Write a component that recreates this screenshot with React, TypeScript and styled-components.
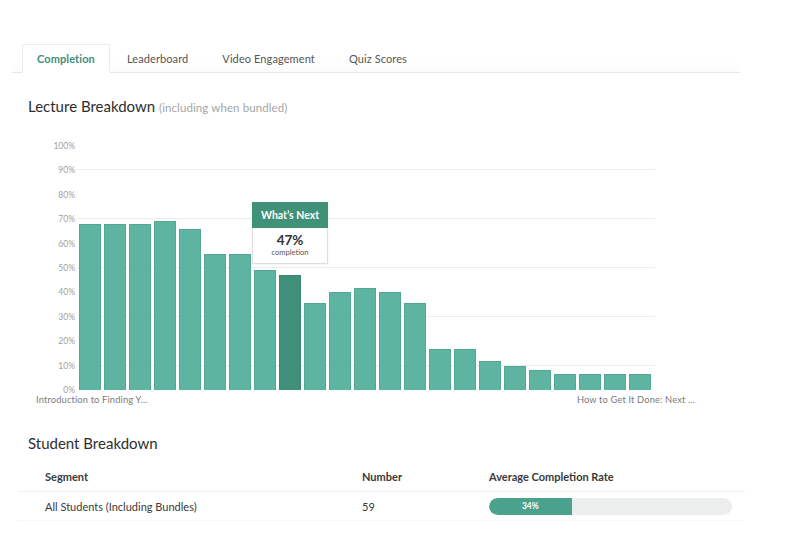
import React from "react";
import styled, { createGlobalStyle } from "styled-components";

const Global = createGlobalStyle`
  html, body { margin: 0; padding: 0; background: #fff; }
  body { font-family: Lato, "Open Sans", "Liberation Sans", sans-serif; color: #333; }
  * { box-sizing: border-box; }
`;

const Page = styled.div`
  width: 810px;
  height: 559px;
  padding-top: 44px;
  overflow: hidden;
`;

const TabBar = styled.div`
  margin-left: 12px;
  width: 728px;
  height: 29px;
  display: flex;
  align-items: stretch;
  padding-left: 10px;
  border-bottom: 1px solid #e6e6e6;
  background: linear-gradient(to bottom, #fff 60%, #fbfbfb 100%);
`;

const Tab = styled.div<{ $active?: boolean }>`
  display: flex;
  align-items: center;
  justify-content: center;
  padding: 0 ${(p) => (p.$active ? "14px" : "16px")};
  margin-bottom: -1px;
  font-size: 11px;
  font-weight: ${(p) => (p.$active ? 700 : 400)};
  color: ${(p) => (p.$active ? "#3f8f78" : "#555")};
  background: ${(p) => (p.$active ? "#fff" : "transparent")};
  border: 1px solid ${(p) => (p.$active ? "#ececec" : "transparent")};
  border-bottom: 1px solid ${(p) => (p.$active ? "#fff" : "transparent")};
  letter-spacing: 0.1px;
`;

const Section = styled.div`
  padding-left: 28px;
`;

const Title = styled.h2`
  margin: 24px 0 0 0;
  font-size: 15px;
  line-height: 18px;
  font-weight: 400;
  color: #2e2e2e;
`;

const Sub = styled.span`
  font-size: 11.5px;
  color: #a5a5a5;
  letter-spacing: 0.1px;
`;

const ChartWrap = styled.div`
  margin-top: 29px;
  display: flex;
  flex-direction: column;
`;

const ChartRow = styled.div`
  display: flex;
  align-items: flex-start;
`;

const YAxis = styled.div`
  width: 48px;
  height: 244px;
  display: flex;
  flex-direction: column;
  justify-content: space-between;
  align-items: flex-end;
  padding-right: 1px;
`;

const YLabel = styled.div`
  height: 0;
  display: flex;
  align-items: center;
  font-size: 8.5px;
  color: #a0a0a0;
`;

const Plot = styled.div`
  position: relative;
  width: 577px;
  height: 244px;
  margin-left: 2px;
  display: flex;
  align-items: flex-end;
  gap: 3px;
  padding-left: 1px;
`;

const GridLine = styled.div`
  position: absolute;
  left: 0;
  right: 0;
  height: 1px;
  background: #ececec;
`;

const Bar = styled.div<{ $dark?: boolean }>`
  position: relative;
  width: 22px;
  flex: none;
  background: ${(p) => (p.$dark ? "#3f8f79" : "#5db4a1")};
  border: 1px solid ${(p) => (p.$dark ? "#3a8571" : "#53a894")};
  border-bottom: none;
`;

const Tooltip = styled.div`
  position: absolute;
  bottom: calc(100% + 12px);
  left: 50%;
  transform: translateX(-50%);
  width: 76px;
  background: #fff;
  border: 1px solid #dedede;
  box-shadow: 0 1px 2px rgba(0, 0, 0, 0.06);
  z-index: 2;
`;

const TipHead = styled.div`
  background: #3f9178;
  color: #fff;
  font-size: 10.5px;
  font-weight: 700;
  height: 26px;
  display: flex;
  align-items: center;
  justify-content: center;
  margin: -1px -1px 0 -1px;
`;

const TipBody = styled.div`
  display: flex;
  flex-direction: column;
  align-items: center;
  padding: 4px 0 5px;
`;

const TipValue = styled.div`
  font-size: 13.5px;
  font-weight: 700;
  color: #333;
  line-height: 16px;
`;

const TipLabel = styled.div`
  font-size: 7.5px;
  color: #555;
  line-height: 10px;
`;

const XLabels = styled.div`
  display: flex;
  justify-content: space-between;
  width: 659px;
  margin-left: 8px;
  margin-top: 4px;
  font-size: 9.3px;
  color: #7a7a7a;
  letter-spacing: 0.15px;
`;

const SectionTitle = styled.h2`
  margin: 29px 0 0 0;
  font-size: 15px;
  line-height: 18px;
  font-weight: 400;
  color: #2e2e2e;
`;

const Table = styled.div`
  margin-top: 10px;
  margin-left: -10px;
  width: 727px;
  display: flex;
  flex-direction: column;
`;

const Row = styled.div<{ $head?: boolean }>`
  display: grid;
  grid-template-columns: 317px 127px 1fr;
  align-items: center;
  height: ${(p) => (p.$head ? "30px" : "29px")};
  padding-left: 27px;
  font-size: 11px;
  font-weight: ${(p) => (p.$head ? 700 : 400)};
  color: #3a3a3a;
  border-bottom: 1px solid ${(p) => (p.$head ? "#f0f0f0" : "#f7f7f7")};
`;

const Progress = styled.div`
  width: 243px;
  height: 17px;
  border-radius: 9px;
  background: #eceeee;
  overflow: hidden;
  display: flex;
`;

const Fill = styled.div`
  height: 100%;
  background: #4aa28c;
  border-radius: 9px 0 0 9px;
  display: flex;
  align-items: center;
  justify-content: center;
  color: #fff;
  font-size: 8.5px;
  font-weight: 700;
`;

const values = [68, 68, 68, 69.2, 66, 55.7, 55.7, 49, 47, 35.5, 40.3, 42, 40.3, 35.5, 16.8, 16.8, 11.7, 9.8, 8.2, 6.5, 6.5, 6.5, 6.5];
const yLabels = ["100%", "90%", "80%", "70%", "60%", "50%", "40%", "30%", "20%", "10%", "0%"];
const grid = [90, 70, 50, 30, 10];

export default function App() {
  return (
    <Page>
      <Global />
      <TabBar>
        <Tab $active>Completion</Tab>
        <Tab>Leaderboard</Tab>
        <Tab>Video Engagement</Tab>
        <Tab>Quiz Scores</Tab>
      </TabBar>
      <Section>
        <Title>
          Lecture Breakdown <Sub>(including when bundled)</Sub>
        </Title>
        <ChartWrap>
          <ChartRow>
            <YAxis>
              {yLabels.map((l) => (
                <YLabel key={l}>{l}</YLabel>
              ))}
            </YAxis>
            <Plot>
              {grid.map((g) => (
                <GridLine key={g} style={{ bottom: `${g}%` }} />
              ))}
              {values.map((v, i) => (
                <Bar key={i} $dark={i === 8} style={{ height: `${v}%` }}>
                  {i === 8 && (
                    <Tooltip>
                      <TipHead>What’s Next</TipHead>
                      <TipBody>
                        <TipValue>47%</TipValue>
                        <TipLabel>completion</TipLabel>
                      </TipBody>
                    </Tooltip>
                  )}
                </Bar>
              ))}
            </Plot>
          </ChartRow>
          <XLabels>
            <span>Introduction to Finding Y...</span>
            <span>How to Get It Done: Next ...</span>
          </XLabels>
        </ChartWrap>
        <SectionTitle>Student Breakdown</SectionTitle>
        <Table>
          <Row $head>
            <span>Segment</span>
            <span>Number</span>
            <span>Average Completion Rate</span>
          </Row>
          <Row>
            <span>All Students (Including Bundles)</span>
            <span>59</span>
            <Progress>
              <Fill style={{ width: "34%" }}>34%</Fill>
            </Progress>
          </Row>
        </Table>
      </Section>
    </Page>
  );
}
